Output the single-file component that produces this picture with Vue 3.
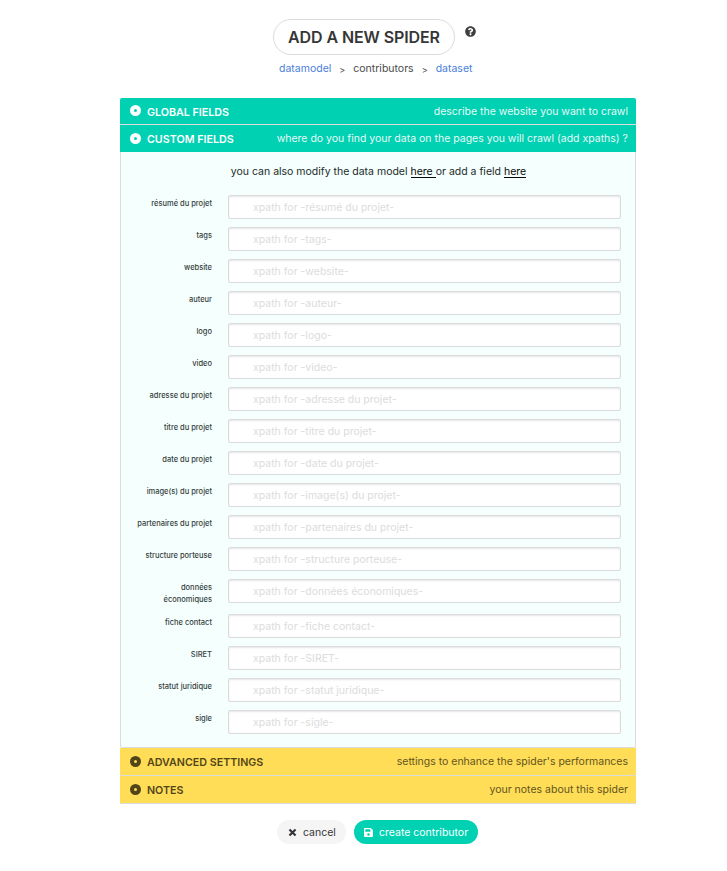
<script setup>
const fields = [
  'résumé du projet', 'tags', 'website', 'auteur', 'logo', 'video',
  'adresse du projet', 'titre du projet', 'date du projet',
  'image(s) du projet', 'partenaires du projet', 'structure porteuse',
  'données économiques', 'fiche contact', 'SIRET', 'statut juridique', 'sigle',
]
</script>

<template>
  <main class="page">
    <header class="heading">
      <h1 class="title">ADD A NEW SPIDER</h1>
      <svg class="help" viewBox="0 0 512 512"><path fill="currentColor" d="M504 256c0 137-111 248-248 248S8 393 8 256 119 8 256 8s248 111 248 248zM262.700 90c-54.500 0-89.300 23-116.500 63.800-3.500 5.300-2.400 12.400 2.700 16.300l34.700 26.300c5.200 3.900 12.600 3 16.700-2.100 17.900-22.700 30.100-35.800 57.300-35.800 20.400 0 45.700 13.100 45.700 33 0 15-12.400 22.700-32.500 34C247.100 238.500 216 254.900 216 296v4c0 6.600 5.400 12 12 12h56c6.600 0 12-5.400 12-12v-1.300c0-28.500 83.200-29.600 83.200-106.700 0-58-60.200-102-116.500-102zM256 338c-25.400 0-46 20.600-46 46s20.600 46 46 46 46-20.600 46-46-20.600-46-46-46z" /></svg>
    </header>
    <nav class="crumbs">
      <a class="c1">datamodel</a><span class="sep">&gt;</span><span class="c2">contributors</span><span class="sep">&gt;</span><a class="c3">dataset</a>
    </nav>

    <section class="accordion">
      <div class="bar green first">
        <span class="dot"></span><strong class="b1">GLOBAL FIELDS</strong>
        <span class="desc">describe the website you want to crawl</span>
      </div>
      <div class="bar green second">
        <span class="dot"></span><strong>CUSTOM FIELDS</strong>
        <span class="desc">where do you find your data on the pages you will crawl (add xpaths) ?</span>
      </div>
      <div class="panel">
        <p class="intro">you can also modify the data model <a>here </a>or add a field <a>here</a></p>
        <div v-for="f in fields" :key="f" class="row">
          <label class="label">{{ f }}</label>
          <input class="input" type="text" :placeholder="`xpath for -${f}-`">
        </div>
      </div>
      <div class="bar yellow">
        <span class="dot"></span><strong>ADVANCED SETTINGS</strong>
        <span class="desc">settings to enhance the spider's performances</span>
      </div>
      <div class="bar yellow">
        <span class="dot"></span><strong>NOTES</strong>
        <span class="desc">your notes about this spider</span>
      </div>
    </section>

    <footer class="actions">
      <button class="btn cancel">
        <svg class="x" viewBox="0 0 10 10"><path d="M1.600 1.600L8.400 8.400M8.400 1.600L1.600 8.400" stroke="currentColor" stroke-width="2.400" /></svg>
        <span>cancel</span>
      </button>
      <button class="btn create">
        <svg class="save" viewBox="0 0 448 512"><path fill="currentColor" d="M434 130L350 46a48 48 0 0 0-34-14H48A48 48 0 0 0 0 80v352a48 48 0 0 0 48 48h352a48 48 0 0 0 48-48V164a48 48 0 0 0-14-34zM224 416a64 64 0 1 1 0-128 64 64 0 0 1 0 128zm96-305v101a12 12 0 0 1-12 12H76a12 12 0 0 1-12-12V108a12 12 0 0 1 12-12h229a12 12 0 0 1 8 4l4 3a12 12 0 0 1 3 8z" /></svg>
        <span>create contributor</span>
      </button>
    </footer>
  </main>
</template>

<style>
body { background: #fff; }
</style>

<style scoped>
* { box-sizing: border-box; }
.page {
  height: 871px;
  padding-top: 19px;
  font-family: Inter, "Liberation Sans", sans-serif;
  font-size: 10.5px;
  color: #4a4a4a;
}
.heading { display: flex; margin-left: 273px; height: 36px; }
.title {
  width: 182px; height: 36px; margin: 0;
  border: 1px solid #dbdbdb; border-radius: 18px;
  font-size: 16px; line-height: 35px; font-weight: 600; letter-spacing: -0.1px;
  text-align: center; color: #363636; white-space: nowrap;
}
.help { width: 11px; height: 11px; margin: 7px 0 0 10px; color: #3f3f3f; }
.crumbs {
  display: flex; margin: 6px 0 0 279px; height: 16px; line-height: 16px;
  white-space: nowrap;
}
.crumbs a { color: #4a80dc; }
.sep { width: 22px; text-align: center; font-size: 9px; line-height: 17px; }
.accordion { width: 516px; margin: 21px 0 0 120px; }
.bar {
  display: flex; align-items: center; height: 28px; padding: 0 8px 0 10px;
  border-bottom: 1px solid #dbdbdb; white-space: nowrap;
}
.bar strong { font-size: 10.700px; font-weight: 600; padding-top: 2px; }
.green { background: #00d1b2; color: #fff; }
.yellow { background: #ffdd57; color: #524618; }
.first { height: 27px; border-radius: 2px 2px 0 0; }
.second { height: 27px; border-bottom: 0; }
.dot {
  width: 11px; height: 11px; margin: 0 6px 1px 0;
  border: 4px solid currentColor; border-radius: 50%;
}
.desc { margin-left: auto; opacity: 0.9; }
.panel {
  height: 596px; padding: 13px 14px 0 15px;
  background: #f5fffe; border: 1px solid #dbdbdb; border-top: 0;
  border-radius: 0 0 2px 2px;
}
.intro {
  margin: 0 0 17px; height: 13px; line-height: 13px; text-align: center;
  color: #1b2b29; white-space: pre;
}
.intro a { display: inline-block; height: 13px; border-bottom: 1px solid #0a0a0a; color: #0a0a0a; }
.row { display: flex; align-items: flex-start; margin-bottom: 8px; }
.label {
  width: 76px; padding-top: 3px; margin-right: 16px;
  font-size: 7.500px; line-height: 12px; font-weight: 500; text-align: right; color: #363f3e;
}
.input {
  flex: 1; min-width: 0; height: 24px; padding: 1px 24px 0;
  border: 1px solid #dbdbdb; border-radius: 2px; background: #fff;
  box-shadow: inset 0 1px 2px rgba(10, 10, 10, 0.1);
  font: inherit; outline: none;
}
.input::placeholder { color: #dcdcdc; opacity: 1; }
.actions { display: flex; gap: 8px; margin: 16px 0 0 277px; }
.btn {
  display: flex; align-items: center; height: 24px; padding: 0 0 0 11px;
  border: 0; border-radius: 12px; font: inherit; white-space: nowrap;
}
.cancel { width: 69px; background: #f5f5f5; color: #363636; }
.create { width: 124px; padding-left: 10px; background: #00d1b2; color: #fff; }
.x { width: 9px; height: 9px; margin-right: 6px; }
.save { width: 9px; height: 11px; margin-right: 6px; }
</style>
